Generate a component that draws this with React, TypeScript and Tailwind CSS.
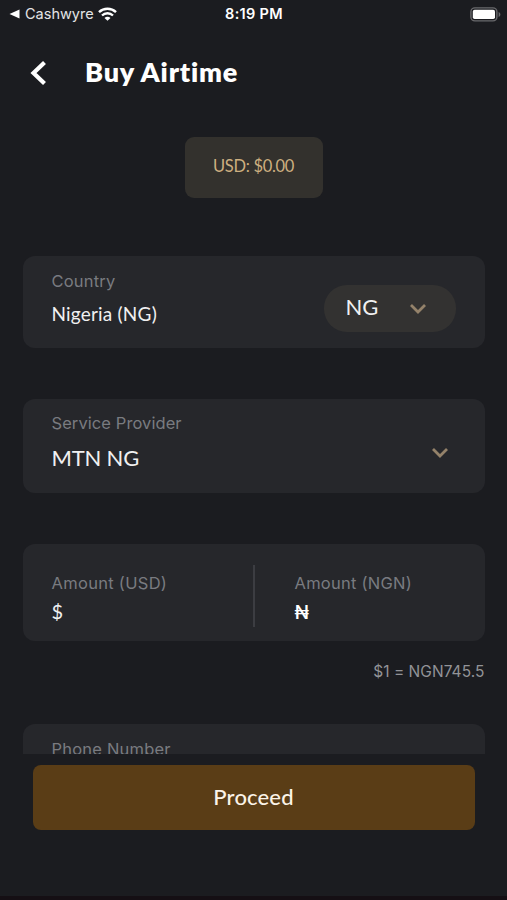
import type { ReactNode } from "react";

const ChevronDown = () => (
  <svg width="18" height="12" viewBox="0 0 18 12" fill="none" className="shrink-0">
    <path d="M2 2L9 9L16 2" stroke="#94826a" strokeWidth="2.8" />
  </svg>
);

const Label = ({ children, className = "tracking-[0.2px]" }: { children: ReactNode; className?: string }) => (
  <div className={`font-['Inter',sans-serif] text-[16.5px] leading-5 whitespace-nowrap text-[#797b80] ${className}`}>
    {children}
  </div>
);

const StatusBar = () => (
  <div className="grid h-7 grid-cols-3 items-center pl-[9px] pr-[6px] font-['Inter',sans-serif] text-white">
    <div className="flex items-center">
      <svg width="11" height="10" viewBox="0 0 11 10" fill="#fff">
        <path d="M10.5 0.5V9.5L0.5 5Z" />
      </svg>
      <span className="ml-[5px] text-[14.5px] leading-5 text-[#e4e4e6]">Cashwyre</span>
      <svg width="19" height="14" viewBox="0 0 19 14" fill="none" stroke="#fff" strokeWidth="2.4" className="ml-1 shrink-0">
        <path d="M1 5.1C5.7 0.6 13.3 0.6 18 5.1" />
        <path d="M4 8.5C7.1 5.5 11.9 5.5 15 8.5" />
        <path d="M9.5 13.8L6.5 10.9C8.1 9.4 10.9 9.4 12.5 10.9Z" fill="#fff" stroke="none" />
      </svg>
    </div>
    <div className="pr-[2px] text-center text-[14.5px] font-semibold leading-5 tracking-[0.3px]">8:19 PM</div>
    <div className="flex justify-end">
      <svg width="31" height="15" viewBox="0 0 31 15" fill="none">
        <rect x="0.9" y="0.9" width="26" height="13" rx="4" stroke="#69696c" strokeWidth="1.4" />
        <rect x="2.8" y="2.8" width="22.2" height="9.2" rx="1.8" fill="#fff" />
        <path d="M28.6 5V10C29.7 9.6 30.4 8.7 30.4 7.5C30.4 6.3 29.7 5.4 28.6 5Z" fill="#69696c" />
      </svg>
    </div>
  </div>
);

const App = () => {
  return (
    <div className="flex h-[900px] w-[507px] flex-col overflow-hidden border-b-4 border-[#150f14] bg-[#1b1c20] font-['Lato',sans-serif] text-[#f0f0f1]">
      <StatusBar />

      {/* Header */}
      <header className="flex h-[90px] items-center pl-[29px]">
        <svg width="18" height="26" viewBox="0 0 18 26" fill="none">
          <path d="M15.5 2.5L4.5 13L15.5 23.5" stroke="#fff" strokeWidth="4.2" />
        </svg>
        <h1 className="ml-[38px] pb-[3px] text-[27px] font-extrabold leading-8 tracking-[0.8px] text-white">Buy Airtime</h1>
      </header>

      {/* Form */}
      <main className="h-[636px] overflow-hidden px-[22.5px] pt-[19px]">
        <div className="mx-auto flex h-[61px] w-[138px] items-center justify-center rounded-[9px] bg-[#33312d] pb-[3px] text-[16.5px] leading-5 tracking-[-0.3px] text-[#cdaf80]">
          USD: $0.00
        </div>

        <section className="mt-[58px] flex h-[92px] justify-between rounded-xl bg-[#26272b] pl-[29px] pr-[29px]">
          <div className="pt-[15px]">
            <Label>Country</Label>
            <div className="mt-[11px] text-[19px] leading-6 tracking-[0.2px]">Nigeria (NG)</div>
          </div>
          <div className="mt-[29px] flex h-[47px] w-[132px] items-center justify-between rounded-[23px] bg-[#333231] pl-[22px] pr-[29px]">
            <span className="pb-[3px] text-[22px] leading-7">NG</span>
            <ChevronDown />
          </div>
        </section>

        <section className="mt-[51px] flex h-[94px] justify-between rounded-xl bg-[#26272b] pl-[29px] pr-[36px]">
          <div className="pt-[14px]">
            <Label className="tracking-[0.08px]">Service Provider</Label>
            <div className="mt-[11px] text-[22px] leading-7 tracking-[-0.2px]">MTN NG</div>
          </div>
          <div className="mt-12">
            <ChevronDown />
          </div>
        </section>

        <section className="mt-[51px] flex h-[97px] rounded-xl bg-[#26272b] pl-[29px]">
          <div className="w-[201px] pt-[29px]">
            <Label className="tracking-[0.3px]">Amount (USD)</Label>
            <div className="mt-[6px] text-[20px] leading-6">$</div>
          </div>
          <div className="mt-[21px] h-[62px] w-[2px] bg-[#3c3d42]" />
          <div className="ml-10 pt-[29px]">
            <Label className="tracking-[0.25px]">Amount (NGN)</Label>
            <div className="mt-2 font-['Inter',sans-serif] text-[19px] font-medium leading-6 text-white">₦</div>
          </div>
        </section>

        <div className="mt-[21px] text-right font-['Inter',sans-serif] text-[15.5px] leading-5 tracking-[0.05px] text-[#929397]">
          $1 = NGN745.5
        </div>

        <section className="mt-[42px] h-[94px] rounded-xl bg-[#26272b] pl-[29px] pt-[15px]">
          <Label>Phone Number</Label>
        </section>
      </main>

      {/* Footer */}
      <footer className="pl-[33px] pr-8 pt-[11px]">
        <button className="h-[65px] w-full rounded-lg bg-[#5a3d16] pb-px pr-px text-[22px] font-medium leading-7 tracking-[0.15px] text-[#fbf3e8]">
          Proceed
        </button>
      </footer>
    </div>
  );
};

export default App;
